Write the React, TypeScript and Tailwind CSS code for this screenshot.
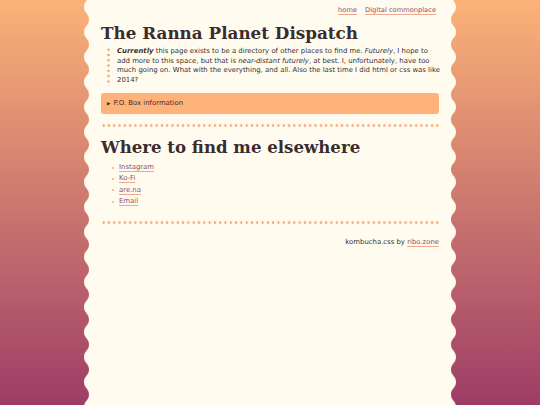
import React from "react";

function Wave({ id, side }: { id: string; side: "left" | "right" }) {
  const d =
    side === "left"
      ? "M5,0 C5,6.25 0,6.25 0,12.5 C0,18.75 5,18.75 5,25 Z"
      : "M0,0 C0,6.25 5,6.25 5,12.5 C5,18.75 0,18.75 0,25 Z";
  return (
    <div className="w-[5px] shrink-0 self-stretch">
      <svg className="block h-full w-full" preserveAspectRatio="none">
        <defs>
          <pattern id={id} width="5" height="25" patternUnits="userSpaceOnUse" y="-5.5">
            <path d={d} fill="#fffcef" />
          </pattern>
        </defs>
        <rect x="0" y="0" width="100%" height="100%" fill={`url(#${id})`} />
      </svg>
    </div>
  );
}

function Dots() {
  return (
    <div className="h-[3px] w-full bg-[radial-gradient(circle,#f6b282_1.1px,transparent_1.5px)] bg-[length:5.3px_3px] bg-repeat-x" />
  );
}

const link =
  "text-[#8e4b5c] underline decoration-[#f3a68f] decoration-1 underline-offset-[1.5px]";

export default function App() {
  return (
    <div className="flex min-h-screen w-full justify-center bg-[linear-gradient(to_bottom,#fcb277,#9d3d66)] font-['DejaVu_Sans',sans-serif] text-[6.9px] leading-[9.8px] text-[#382c30]">
      <div className="flex min-h-screen">
        <Wave id="wl" side="left" />
        <div className="flex w-[362px] flex-col bg-[#fffcef] px-3 pt-[6px]">
          <nav className="flex justify-end gap-[8px] pr-[3px] text-[6.7px]">
            <a className={link}>home</a>
            <a className={link}>Digital commonplace</a>
          </nav>

          <h1 className="mt-[7px] font-['DejaVu_Serif',serif] text-[16.8px] font-bold leading-[20px] text-[#3a2c2e]">
            The Ranna Planet Dispatch
          </h1>

          <div className="mt-[4px] flex">
            <div className="ml-[5.5px] w-[3px] shrink-0 self-stretch bg-[radial-gradient(circle,#f6b282_1.1px,transparent_1.5px)] bg-[length:3px_5.3px] bg-repeat-y" />
            <p className="whitespace-nowrap pl-[7.5px]">
              <strong className="font-bold italic">Currently</strong> this page exists to be a directory of other places to find me. <em>Futurely</em>, I hope to
              <br />
              add more to this space, but that is <em>near-distant futurely</em>, at best. I, unfortunately, have too
              <br />
              much going on. What with the everything, and all. Also the last time I did html or css was like
              <br />
              2014?
            </p>
          </div>

          <div className="mt-[7px] flex h-[21px] items-center rounded-[3px] bg-[#ffb27a] pl-[6px]">
            <span className="mr-[3px] text-[4.5px]">▶</span>
            <span>P.O. Box information</span>
          </div>

          <div className="mt-[10px]">
            <Dots />
          </div>

          <h2 className="mt-[10px] font-['DejaVu_Serif',serif] text-[16.6px] font-bold leading-[20px] text-[#3a2c2e]">
            Where to find me elsewhere
          </h2>

          <ul className="mt-[5px] flex flex-col">
            {["Instagram", "Ko-Fi", "are.na", "Email"].map((t) => (
              <li key={t} className="flex h-[11.4px] items-center">
                <span className="ml-[10.5px] mr-[5.5px] h-[2px] w-[2px] rounded-full bg-[#f5ae80]" />
                <a className={link}>{t}</a>
              </li>
            ))}
          </ul>

          <div className="mt-[13px]">
            <Dots />
          </div>

          <footer className="mt-[14px] text-right">
            kombucha.css by <a className={link}>ribo.zone</a>
          </footer>
        </div>
        <Wave id="wr" side="right" />
      </div>
    </div>
  );
}
